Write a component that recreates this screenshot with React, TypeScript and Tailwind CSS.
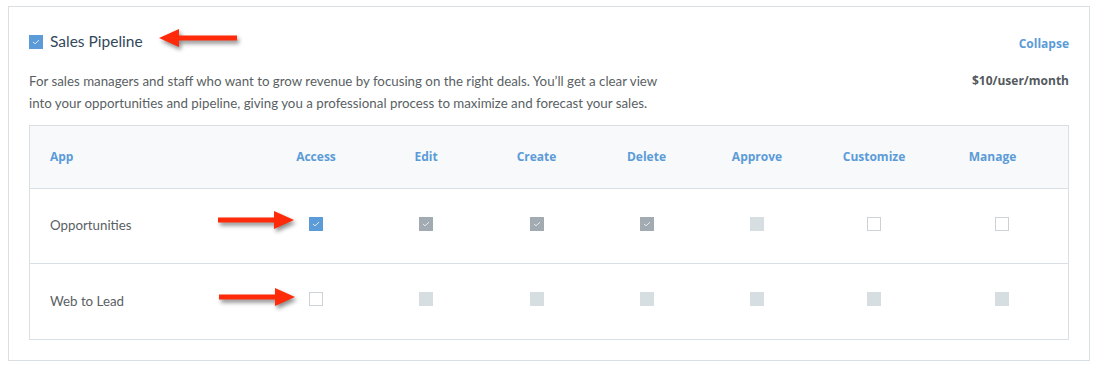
import React from "react";

type Kind = "blue" | "gray" | "disabled" | "empty";

function Check({ color = "white" }: { color?: string }) {
  return (
    <svg width="8" height="6" viewBox="0 0 8 6" className="block">
      <path d="M1.2 3.2 L3 4.8 L6.8 1.4" fill="none" stroke={color} strokeWidth="1" strokeLinecap="round" strokeLinejoin="round" />
    </svg>
  );
}

function Box({ kind }: { kind: Kind }) {
  if (kind === "blue")
    return (
      <div className="w-[14px] h-[14px] bg-[#5b9bd8] flex items-center justify-center">
        <Check color="#dce9f7" />
      </div>
    );
  if (kind === "gray")
    return (
      <div className="w-[14px] h-[14px] bg-[#a2abb2] flex items-center justify-center">
        <Check color="#e6eaed" />
      </div>
    );
  if (kind === "disabled") return <div className="w-[14px] h-[14px] bg-[#d6dee2]" />;
  return <div className="w-[14px] h-[14px] bg-white border border-[#ccd3d8]" />;
}

function Arrow({ dir }: { dir: "left" | "right" }) {
  return (
    <svg width="86" height="26" viewBox="0 0 86 26" className="block" style={{ filter: "drop-shadow(2px 3px 2px rgba(0,0,0,0.45))" }}>
      {dir === "right" ? (
        <path d="M2 10.5 H58 V4 L78 13 L58 22 V15.5 H2 Z" fill="#ff2a0a" />
      ) : (
        <path d="M82 10.5 H24 V4 L4 13 L24 22 V15.5 H82 Z" fill="#ff2a0a" />
      )}
    </svg>
  );
}

const cols = "grid grid-cols-[231px_110px_110px_111px_109px_112px_122px_133px]";
const headers = ["Access", "Edit", "Create", "Delete", "Approve", "Customize", "Manage"];

const rows: { name: string; boxes: Kind[] }[] = [
  { name: "Opportunities", boxes: ["blue", "gray", "gray", "gray", "disabled", "empty", "empty"] },
  { name: "Web to Lead", boxes: ["empty", "disabled", "disabled", "disabled", "disabled", "disabled", "disabled"] },
];

const boldFont = { fontFamily: "'Open Sans', Lato, sans-serif" };

export default function App() {
  return (
    <div className="bg-white w-[1097px] h-[365px] pt-[6px] pl-[8px]" style={{ fontFamily: "Lato, 'Open Sans', sans-serif" }}>
      <div className="relative w-[1082px] h-[355px] border border-[#d9dfe3] bg-white px-5 pt-[24px]">
        {/* title row */}
        <div className="flex items-center justify-between h-[22px]">
          <div className="flex items-center gap-[7px]">
            <Box kind="blue" />
            <span className="text-[15.5px] text-[#34485c]">Sales Pipeline</span>
          </div>
          <span className="text-[12px] font-bold text-[#5b9bd8] mt-[4px]" style={boldFont}>Collapse</span>
        </div>
        {/* description */}
        <div className="flex justify-between mt-[17px] text-[13.3px] leading-[22px] text-[#5a5f64]">
          <p>
            For sales managers and staff who want to grow revenue by focusing on the right deals. You’ll get a clear view
            <br />
            into your opportunities and pipeline, giving you a professional process to maximize and forecast your sales.
          </p>
          <span className="font-bold text-[12px] text-[#555a5e]" style={boldFont}>$10/user/month</span>
        </div>
        {/* table */}
        <div className="mt-[11px] border border-[#d9dfe3]">
          <div className={`${cols} h-[63px] bg-[#f7f9fb] border-b border-[#d9dfe3] items-center text-[12px] font-bold text-[#5b9bd8]`} style={boldFont}>
            <div className="pl-5">App</div>
            {headers.map((h, i) => (
              <div key={h} className={`text-center ${i === 6 ? "pr-[18px]" : ""}`}>{h}</div>
            ))}
          </div>
          {rows.map((r, ri) => (
            <div key={r.name} className={`${cols} ${ri === 0 ? "h-[75px] border-b border-[#d9dfe3]" : "h-[75px]"} items-center`}>
              <div className="pl-5 text-[13.3px] text-[#5a5f64]">{r.name}</div>
              {r.boxes.map((b, i) => (
                <div key={i} className="flex justify-center -mt-[5px]">
                  <Box kind={b} />
                </div>
              ))}
            </div>
          ))}
        </div>

        {/* annotation arrows */}
        <div className="absolute left-[146px] top-[18px]">
          <Arrow dir="left" />
        </div>
        <div className="absolute left-[207px] top-[200px]">
          <Arrow dir="right" />
        </div>
        <div className="absolute left-[208px] top-[277px]">
          <Arrow dir="right" />
        </div>
      </div>
    </div>
  );
}
